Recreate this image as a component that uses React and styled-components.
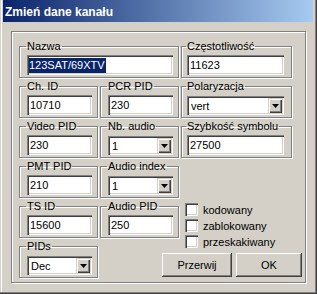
import React from "react";
import styled, { createGlobalStyle } from "styled-components";

const GlobalStyle = createGlobalStyle`
  html, body {
    margin: 0;
    padding: 0;
    background: #d4d0c8;
  }
  body {
    font-family: "Liberation Sans", Arial, sans-serif;
    font-size: 11px;
    color: #000;
  }
`;

const Window = styled.div`
  box-sizing: border-box;
  width: 317px;
  height: 294px;
  padding: 0 4px 3px 3px;
  background: #d4d0c8;
  box-shadow: inset -1px -1px 0 #404040, inset -2px -2px 0 #808080,
    inset 1px 0 0 #d4d0c8, inset 2px 0 0 #fff;
`;

const TitleBar = styled.div`
  box-sizing: border-box;
  height: 22px;
  display: flex;
  align-items: center;
  padding: 2px 0 0 2px;
  background: linear-gradient(to right, #0a246a, #a6caf0);
  color: #fff;
  font-weight: bold;
  font-size: 12px;
`;

const Frame = styled.div`
  box-sizing: border-box;
  margin: 9px 0 0 8px;
  width: 295px;
  height: 252px;
  border: 1px solid #808080;
  box-shadow: inset 1px 1px 0 #fff, 1px 1px 0 #fff;
  padding: 8px 0 0 7px;
  display: grid;
  grid-template-columns: 79px 79px 111px 10px;
  grid-template-rows: repeat(6, 38px);
  column-gap: 2px;
  row-gap: 2px;
`;

const Group = styled.fieldset`
  margin: 0;
  min-width: 0;
  padding: 2px ${(p) => p.$right ?? 5}px 2px ${(p) => p.$left ?? 7}px;
  border: 1px solid #808080;
  box-shadow: inset 1px 1px 0 #fff, 1px 1px 0 #fff;
  grid-area: ${(p) => p.$at};
`;

const Legend = styled.legend`
  margin-left: -1px;
  padding: 0 1px;
  line-height: 13px;
  font-size: 11px;
  white-space: nowrap;
`;

const Edit = styled.div`
  box-sizing: border-box;
  height: 20px;
  background: #fff;
  box-shadow: inset 1px 1px 0 #808080, inset 2px 2px 0 #404040,
    inset -1px -1px 0 #fff, inset -2px -2px 0 #d4d0c8;
  padding: 0 2px 0 3px;
  display: flex;
  align-items: center;
  font-size: 11px;
  white-space: nowrap;
`;

const Selected = styled.span`
  background: #0a246a;
  color: #fff;
  line-height: 15px;
  padding: 0 1px 0 0;
  margin-left: -1px;
`;

const Combo = styled(Edit)`
  height: 19px;
  margin-top: 1px;
  justify-content: space-between;
  padding: 2px 2px 2px 4px;
`;

const DropButton = styled.span`
  box-sizing: border-box;
  width: 14px;
  height: 15px;
  display: flex;
  align-items: center;
  justify-content: center;
  background: #d4d0c8;
  box-shadow: inset 1px 1px 0 #d4d0c8, inset 2px 2px 0 #fff,
    inset -1px -1px 0 #404040, inset -2px -2px 0 #808080;
`;

const Checks = styled.div`
  grid-area: 5 / 3;
  display: flex;
  flex-direction: column;
  gap: 3px;
  padding: 3px 0 0 4px;
`;

const CheckRow = styled.label`
  display: flex;
  align-items: center;
  gap: 5px;
  height: 13px;
  font-size: 11px;
`;

const Box = styled.span`
  box-sizing: border-box;
  width: 13px;
  height: 13px;
  background: #fff;
  box-shadow: inset 1px 1px 0 #808080, inset 2px 2px 0 #404040,
    inset -1px -1px 0 #fff, inset -2px -2px 0 #d4d0c8;
`;

const Buttons = styled.div`
  grid-area: 6 / 2 / 7 / 5;
  display: flex;
  justify-content: flex-end;
  align-items: flex-end;
  gap: 4px;
  padding: 0 2px 1px 0;
`;

const Button = styled.button`
  box-sizing: border-box;
  width: ${(p) => p.$w}px;
  height: 24px;
  border: none;
  padding: 0;
  background: #d4d0c8;
  font-family: inherit;
  font-size: 11px;
  color: #000;
  box-shadow: inset -1px -1px 0 #404040, inset 1px 1px 0 #fff,
    inset -2px -2px 0 #808080, inset 2px 2px 0 #d4d0c8;
`;

function Arrow() {
  return (
    <svg width="7" height="4" viewBox="0 0 7 4">
      <polygon points="0,0 7,0 3.5,4" fill="#000" />
    </svg>
  );
}

function Field({ at, label, value, left, right }) {
  return (
    <Group $at={at} $left={left} $right={right}>
      <Legend>{label}</Legend>
      <Edit>{value}</Edit>
    </Group>
  );
}

function Select({ at, label, value, left, right }) {
  return (
    <Group $at={at} $left={left} $right={right}>
      <Legend>{label}</Legend>
      <Combo>
        <span>{value}</span>
        <DropButton>
          <Arrow />
        </DropButton>
      </Combo>
    </Group>
  );
}

export default function App() {
  return (
    <>
      <GlobalStyle />
      <Window>
        <TitleBar>Zmień dane kanału</TitleBar>
        <Frame>
          <Group $at="1 / 1 / 2 / 3">
            <Legend>Nazwa</Legend>
            <Edit>
              <Selected>123SAT/69XTV</Selected>
            </Edit>
          </Group>
          <Field at="1 / 3" label="Częstotliwość" value="11623" left={5} right={7} />

          <Field at="2 / 1" label="Ch. ID" value="10710" />
          <Field at="2 / 2" label="PCR PID" value="230" />
          <Select at="2 / 3" label="Polaryzacja" value="vert" left={5} right={7} />

          <Field at="3 / 1" label="Video PID" value="230" />
          <Select at="3 / 2" label="Nb. audio" value="1" />
          <Field at="3 / 3" label="Szybkość symbolu" value="27500" left={5} right={7} />

          <Field at="4 / 1" label="PMT PID" value="210" />
          <Select at="4 / 2" label="Audio index" value="1" />

          <Field at="5 / 1" label="TS ID" value="15600" />
          <Field at="5 / 2" label="Audio PID" value="250" />
          <Checks>
            <CheckRow>
              <Box />
              kodowany
            </CheckRow>
            <CheckRow>
              <Box />
              zablokowany
            </CheckRow>
            <CheckRow>
              <Box />
              przeskakiwany
            </CheckRow>
          </Checks>

          <Select at="6 / 1" label="PIDs" value="Dec" />
          <Buttons>
            <Button $w={70}>Przerwij</Button>
            <Button $w={66}>OK</Button>
          </Buttons>
        </Frame>
      </Window>
    </>
  );
}
